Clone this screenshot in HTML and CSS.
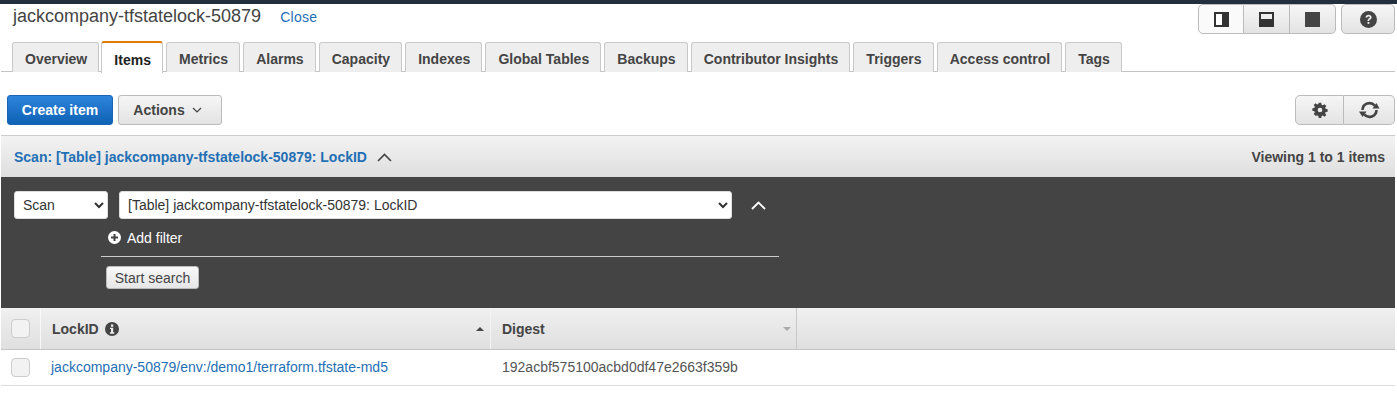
FILE: index.html
```html
<!DOCTYPE html>
<html lang="en">
<head>
<meta charset="utf-8">
<title>jackcompany-tfstatelock-50879</title>
<link rel="stylesheet" href="styles.css">
</head>
<body>
<div class="topbar"></div>
<main class="page">
  <header class="head">
    <h1 class="title">jackcompany-tfstatelock-50879</h1>
    <a class="close" href="#">Close</a>
    <div class="head-tools">
      <div class="btn-group">
        <button class="icon-btn wide first-active" aria-label="Split right">
          <svg width="15" height="15" viewBox="0 0 15 15"><rect width="15" height="15" fill="#333"/><rect x="2" y="2" width="6" height="11" fill="#fff"/></svg>
        </button>
        <button class="icon-btn wide" aria-label="Split bottom">
          <svg width="15" height="15" viewBox="0 0 15 15"><rect width="15" height="15" fill="#333"/><rect x="2" y="2" width="11" height="5" fill="#eee"/></svg>
        </button>
        <button class="icon-btn wide" aria-label="Full">
          <svg width="15" height="15" viewBox="0 0 15 15"><rect width="15" height="15" fill="#444"/></svg>
        </button>
      </div>
      <button class="icon-btn help" aria-label="Help">
        <svg width="17" height="17" viewBox="0 0 16 16"><circle cx="8" cy="8" r="8" fill="#444"/><path d="M5.200 6.200C5.300 4.500 6.500 3.600 8.100 3.600c1.600 0 2.800 1 2.800 2.300 0 1.100-.6 1.700-1.400 2.200-.6.4-.8.6-.8 1.200H7.100c0-1.200.4-1.700 1.200-2.200.6-.4.9-.7.9-1.100 0-.6-.5-.9-1.100-.9-.7 0-1.100.4-1.200 1.100z" fill="#eee"/><rect x="7.100" y="10.300" width="1.700" height="1.800" fill="#eee"/></svg>
      </button>
    </div>
  </header>

  <nav class="tabs">
    <a class="tab">Overview</a>
    <a class="tab active">Items</a>
    <a class="tab">Metrics</a>
    <a class="tab">Alarms</a>
    <a class="tab">Capacity</a>
    <a class="tab">Indexes</a>
    <a class="tab">Global Tables</a>
    <a class="tab">Backups</a>
    <a class="tab">Contributor Insights</a>
    <a class="tab">Triggers</a>
    <a class="tab">Access control</a>
    <a class="tab">Tags</a>
  </nav>

  <section class="toolbar">
    <button class="btn primary">Create item</button>
    <button class="btn actions">Actions
      <svg width="10" height="6" viewBox="0 0 10 6"><path d="M1 1l4 4 4-4" fill="none" stroke="#444" stroke-width="1.200"/></svg>
    </button>
    <div class="btn-group right">
      <button class="icon-btn gear" aria-label="Settings">
        <svg width="16" height="16" viewBox="0 0 16 16"><path fill="#444" fill-rule="evenodd" d="M6.600 0h2.800l.4 2.200 1.300.6L13 1.500l2 2-1.300 1.900.6 1.300 2.200.4v2.800l-2.200.4-.6 1.300 1.300 1.900-2 2-1.900-1.300-1.300.6-.4 2.200H6.600l-.4-2.200-1.300-.6L3 14.500l-2-2 1.300-1.900-.6-1.300L-.5 8.900V6.100l2.200-.4.6-1.300L1 2.500l2-2 1.900 1.300 1.300-.6zM8 5.400a2.600 2.600 0 1 0 0 5.200 2.600 2.600 0 0 0 0-5.200z" transform="translate(.8 .8) scale(.9)"/></svg>
      </button>
      <button class="icon-btn refresh" aria-label="Refresh">
        <svg width="21" height="18" viewBox="0 0 21 18"><path d="M3.500 9a7 7 0 0 1 12.300-4.400" fill="none" stroke="#444" stroke-width="2.600"/><path d="M17.500 9a7 7 0 0 1-12.300 4.400" fill="none" stroke="#444" stroke-width="2.600"/><path d="M13.500 7.500h7L17.500 2z" fill="#444"/><path d="M0 10.500h7.500L3.500 16z" fill="#444"/></svg>
      </button>
    </div>
  </section>

  <section class="scan-bar">
    <a class="scan-link" href="#">Scan: [Table] jackcompany-tfstatelock-50879: LockID</a>
    <svg class="scan-caret" width="15" height="9" viewBox="0 0 15 9"><path d="M1 8l6.500-6.500L14 8" fill="none" stroke="#444" stroke-width="1.600"/></svg>
    <span class="viewing">Viewing 1 to 1 items</span>
  </section>

  <section class="search">
    <div class="search-row">
      <select class="sel sel-mode"><option>Scan</option></select>
      <select class="sel sel-table"><option>[Table] jackcompany-tfstatelock-50879: LockID</option></select>
      <svg class="search-caret" width="15" height="9" viewBox="0 0 15 9"><path d="M1 8l6.500-6.500L14 8" fill="none" stroke="#fff" stroke-width="1.800"/></svg>
    </div>
    <div class="filter-block">
      <div class="add-filter">
        <svg width="13" height="13" viewBox="0 0 13 13"><circle cx="6.500" cy="6.500" r="6.500" fill="#fff"/><path d="M6.500 3v7M3 6.500h7" stroke="#444" stroke-width="2"/></svg>
        <span>Add filter</span>
      </div>
      <button class="start">Start search</button>
    </div>
  </section>

  <section class="grid">
    <div class="grid-head">
      <div class="cell-check"><span class="check"></span></div>
      <div class="th th-lock">
        <span>LockID</span>
        <svg class="info" width="14" height="14" viewBox="0 0 13 13"><circle cx="6.500" cy="6.500" r="6.500" fill="#444"/><rect x="5.500" y="2.300" width="2.200" height="2.100" fill="#eee"/><path d="M4.600 5.300h3v4.300h1v1.300H4.600V9.600h1V6.600h-1z" fill="#eee"/></svg>
        <i class="sort up"></i>
      </div>
      <div class="th th-digest">
        <span>Digest</span>
        <i class="sort down"></i>
      </div>
    </div>
    <div class="grid-row">
      <div class="cell-check"><span class="check"></span></div>
      <a class="td td-lock" href="#">jackcompany-50879/env:/demo1/terraform.tfstate-md5</a>
      <div class="td td-digest">192acbf575100acbd0df47e2663f359b</div>
    </div>
  </section>
</main>
</body>
</html>
```

FILE: styles.css
```css
* { box-sizing: border-box; }
html, body { margin: 0; padding: 0; background: #fff; }
body {
  font-family: "Liberation Sans", Arial, sans-serif;
  font-size: 14px;
  color: #444;
  overflow: hidden;
}
button { font-family: inherit; cursor: pointer; }
a { text-decoration: none; }

.topbar { height: 4px; background: #232f3e; }
.page { padding: 0 2px 0 1px; }

.head { height: 38px; display: flex; align-items: flex-start; }
.title { margin: 1px 0 0 12px; font-size: 18px; font-weight: 400; line-height: 22px; color: #444; }
.close { margin: 5px 0 0 19px; font-size: 14px; line-height: 16px; letter-spacing: .3px; color: #1f6fb5; }
.head-tools { margin-left: auto; display: flex; gap: 5px; }

.btn-group { display: flex; }
.icon-btn {
  display: flex; align-items: center; justify-content: center;
  height: 30px; padding: 0;
  background: linear-gradient(#f6f6f6, #e3e3e3);
  border: 1px solid #bbb;
  border-left-width: 0;
}
.btn-group .icon-btn:first-child { border-left-width: 1px; border-radius: 5px 0 0 5px; }
.btn-group .icon-btn:last-child { border-radius: 0 5px 5px 0; }
.wide { width: 46px; }
.first-active { background: #fafafa; }
.help { width: 54px; border-left-width: 1px; border-radius: 5px; }

.tabs { display: flex; gap: 3px; height: 30px; padding-left: 11px; border-bottom: 1px solid #c4c4c4; }
.tab {
  height: 30px; padding: 0 11.100px 0 12px; line-height: 33px;
  font-weight: 700; font-size: 14px; color: #444;
  background: #eee;
  border: 1px solid #c8c8c8; border-bottom: 0;
  border-radius: 3px 3px 0 0;
  white-space: nowrap;
}
.tab.active {
  height: 32px; margin: -1px 0 -1px -1px; padding-top: 1px;
  background: #fff; color: #222;
  border-top: 2px solid #e07b00;
  line-height: 33px;
}

.toolbar { display: flex; gap: 5px; height: 30px; margin-top: 23px; padding-left: 6px; }
.btn {
  height: 30px; font-size: 14px; font-weight: 700; border-radius: 3px; padding: 0;
}
.primary {
  width: 106px; color: #fff; border: 1px solid #1a66b4;
  background: linear-gradient(#2d84dc, #0f62b4);
}
.actions {
  width: 104px; padding-right: 5px; color: #444; border: 1px solid #bbb;
  background: linear-gradient(#f6f6f6, #e3e3e3);
  display: flex; align-items: center; justify-content: center; gap: 7px;
}
.right { margin-left: auto; }
.gear { width: 49px; }
.refresh { width: 51px; }

.scan-bar {
  display: flex; align-items: center;
  height: 42px; margin-top: 10px; padding: 0 10px 0 13px;
  background: linear-gradient(#f3f3f3, #dedede);
  border-top: 1px solid #ccc;
}
.scan-link { font-size: 14px; font-weight: 700; color: #1f6fb5; }
.scan-caret { margin: 2px 0 0 10px; }
.viewing { margin-left: auto; font-size: 14px; font-weight: 700; color: #444; }

.search { height: 131px; background: #444; padding: 14px 0 0 13px; }
.search-row { display: flex; align-items: center; gap: 11px; }
.sel {
  height: 28px; font-family: inherit; font-size: 14px; color: #333;
  background-color: #fff; border: 1px solid #ddd; border-radius: 3px;
  padding: 0 4px;
}
.sel-mode { width: 94px; }
.sel-table { width: 613px; }
.search-caret { margin-left: 8px; }

.filter-block { width: 678px; margin: 10px 0 0 87px; }
.add-filter {
  display: flex; align-items: center; gap: 6px;
  box-sizing: content-box; height: 17px; padding: 0 0 10px 7px;
  border-bottom: 1px solid #ccc;
  color: #fff; font-size: 14px;
}
.start {
  display: block; margin: 9px 0 0 5px;
  width: 93px; height: 23px; padding: 0;
  font-size: 14px; color: #444;
  background: linear-gradient(#f8f8f8, #e6e6e6);
  border: 1px solid #bbb; border-radius: 3px;
}

.grid-head {
  display: flex; height: 42px;
  background: linear-gradient(#f0f0f0, #dfdfdf);
  border-bottom: 1px solid #c4c4c4;
}
.cell-check { width: 40px; flex: none; display: flex; align-items: center; padding-left: 10px; }
.grid-head .cell-check { border-right: 1px solid #f8f8f8; }
.check {
  width: 19px; height: 19px;
  background: #f2f2f2; border: 1px solid #ccc; border-radius: 4px;
}
.th {
  display: flex; align-items: center; gap: 6px;
  font-size: 14px; font-weight: 700; color: #444; padding-left: 11px;
  height: 100%;
}
.th-lock { width: 450px; border-right: 1px solid #f4f4f4; }
.th-digest { width: 306px; border-right: 1px solid #c8c8c8; }
.sort { margin-left: auto; width: 0; height: 0; border-left: 4px solid transparent; border-right: 4px solid transparent; }
.sort.up { margin-right: 6px; border-bottom: 4px solid #444; }
.sort.down { margin-right: 5px; border-top: 4px solid #aaa; }

.grid-row {
  display: flex; align-items: center; height: 36px; padding-bottom: 1px;
  border-bottom: 1px solid #ddd;
}
.td { font-size: 14px; padding-left: 10px; }
.td-lock { width: 450px; color: #1f6fb5; }
.td-digest { padding-left: 11px; color: #555; }
```
